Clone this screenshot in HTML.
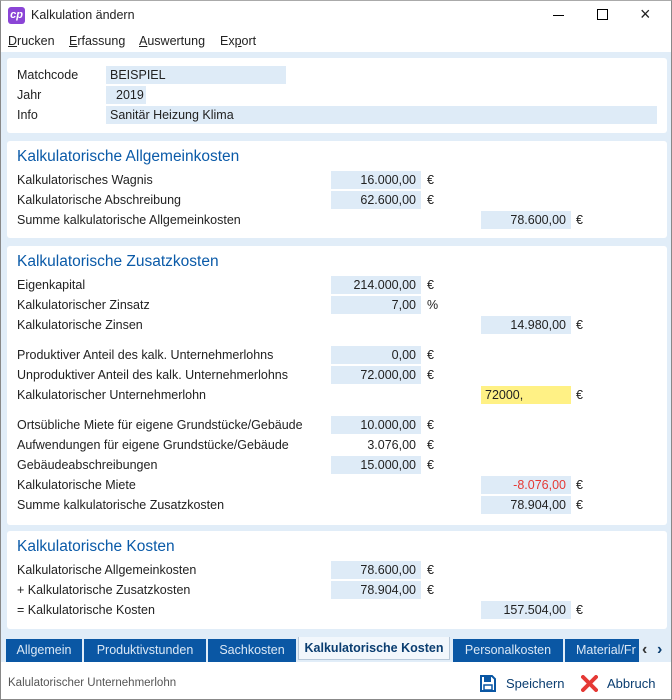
<!DOCTYPE html>
<html><head><meta charset="utf-8"><style>
*{margin:0;padding:0;box-sizing:border-box}
body{width:672px;height:700px;overflow:hidden;font-family:"Liberation Sans",sans-serif;font-size:12.5px;color:#222;background:#fff;position:relative}
.a{position:absolute;white-space:nowrap}
.win{position:absolute;left:0;top:0;width:672px;height:700px;border:1px solid #888;border-top:1px solid #aaa}
.content{position:absolute;left:1px;top:52px;width:670px;height:610px;background:#e1edf8}
.panel{position:absolute;left:6px;width:660px;background:#fff;border-radius:3px}
.h{position:absolute;left:10px;color:#0a5aa8;font-size:15.5px}
.l{position:absolute;left:10px}
.f{position:absolute;height:18px;background:#deebf7;text-align:right;padding-right:5px;line-height:18px}
.e{position:absolute;line-height:18px}
.tab{position:absolute;top:639px;height:23px;background:#0a57a4;color:#dbe8f5;font-size:12.5px;line-height:23px;text-align:center}
u{text-decoration:underline}
</style></head><body>
<div class="win"></div>
<div class="a" style="left:8px;top:7px;width:17px;height:17px;background:#8b45d6;border-radius:3px;color:#fff;font-size:11px;text-align:center;line-height:17px;font-style:italic;font-weight:bold">cp</div>
<div class="a" style="left:31px;top:8px;font-size:12.5px">Kalkulation ändern</div>
<div class="a" style="left:553px;top:15px;width:11px;height:1px;background:#000"></div>
<div class="a" style="left:597px;top:9px;width:11px;height:11px;border:1px solid #000"></div>
<div class="a" style="left:640px;top:4px;font-size:18px;font-weight:300">×</div>
<div class="a" style="left:8px;top:34px"><u>D</u>rucken</div>
<div class="a" style="left:69px;top:34px"><u>E</u>rfassung</div>
<div class="a" style="left:139px;top:34px"><u>A</u>uswertung</div>
<div class="a" style="left:220px;top:34px">Ex<u>p</u>ort</div>
<div class="content">
 <div class="panel" style="top:6px;height:75px">
  <div class="l" style="top:10px">Matchcode</div>
  <div class="f" style="left:99px;top:8px;width:180px;text-align:left;padding-left:4px">BEISPIEL</div>
  <div class="l" style="top:30px">Jahr</div>
  <div class="f" style="left:99px;top:28px;width:40px;text-align:left;padding-left:10px">2019</div>
  <div class="l" style="top:50px">Info</div>
  <div class="f" style="left:99px;top:48px;width:551px;text-align:left;padding-left:4px">Sanitär Heizung Klima</div>
 </div>
 <div class="panel" style="top:89px;height:97px">
  <div class="h" style="top:7px">Kalkulatorische Allgemeinkosten</div>
  <div class="l" style="top:32px">Kalkulatorisches Wagnis</div>
  <div class="f" style="left:324px;top:30px;width:90px">16.000,00</div><div class="e" style="left:420px;top:30px">€</div>
  <div class="l" style="top:52px">Kalkulatorische Abschreibung</div>
  <div class="f" style="left:324px;top:50px;width:90px">62.600,00</div><div class="e" style="left:420px;top:50px">€</div>
  <div class="l" style="top:72px">Summe kalkulatorische Allgemeinkosten</div>
  <div class="f" style="left:474px;top:70px;width:90px">78.600,00</div><div class="e" style="left:569px;top:70px">€</div>
 </div>
 <div class="panel" style="top:194px;height:279px">
  <div class="h" style="top:7px">Kalkulatorische Zusatzkosten</div>
  <div class="l" style="top:32px">Eigenkapital</div>
  <div class="f" style="left:324px;top:30px;width:90px">214.000,00</div><div class="e" style="left:420px;top:30px">€</div>
  <div class="l" style="top:52px">Kalkulatorischer Zinsatz</div>
  <div class="f" style="left:324px;top:50px;width:90px">7,00</div><div class="e" style="left:420px;top:50px">%</div>
  <div class="l" style="top:72px">Kalkulatorische Zinsen</div>
  <div class="f" style="left:474px;top:70px;width:90px">14.980,00</div><div class="e" style="left:569px;top:70px">€</div>
  <div class="l" style="top:102px">Produktiver Anteil des kalk. Unternehmerlohns</div>
  <div class="f" style="left:324px;top:100px;width:90px">0,00</div><div class="e" style="left:420px;top:100px">€</div>
  <div class="l" style="top:122px">Unproduktiver Anteil des kalk. Unternehmerlohns</div>
  <div class="f" style="left:324px;top:120px;width:90px">72.000,00</div><div class="e" style="left:420px;top:120px">€</div>
  <div class="l" style="top:142px">Kalkulatorischer Unternehmerlohn</div>
  <div class="f" style="left:474px;top:140px;width:90px;background:#fff185;text-align:left;padding-left:4px">72000,</div><div class="e" style="left:569px;top:140px">€</div>
  <div class="l" style="top:172px">Ortsübliche Miete für eigene Grundstücke/Gebäude</div>
  <div class="f" style="left:324px;top:170px;width:90px">10.000,00</div><div class="e" style="left:420px;top:170px">€</div>
  <div class="l" style="top:192px">Aufwendungen für eigene Grundstücke/Gebäude</div>
  <div class="f" style="left:324px;top:190px;width:90px;background:#fff">3.076,00</div><div class="e" style="left:420px;top:190px">€</div>
  <div class="l" style="top:212px">Gebäudeabschreibungen</div>
  <div class="f" style="left:324px;top:210px;width:90px">15.000,00</div><div class="e" style="left:420px;top:210px">€</div>
  <div class="l" style="top:232px">Kalkulatorische Miete</div>
  <div class="f" style="left:474px;top:230px;width:90px;color:#e53935">-8.076,00</div><div class="e" style="left:569px;top:230px">€</div>
  <div class="l" style="top:252px">Summe kalkulatorische Zusatzkosten</div>
  <div class="f" style="left:474px;top:250px;width:90px">78.904,00</div><div class="e" style="left:569px;top:250px">€</div>
 </div>
 <div class="panel" style="top:479px;height:98px">
  <div class="h" style="top:7px">Kalkulatorische Kosten</div>
  <div class="l" style="top:32px">Kalkulatorische Allgemeinkosten</div>
  <div class="f" style="left:324px;top:30px;width:90px">78.600,00</div><div class="e" style="left:420px;top:30px">€</div>
  <div class="l" style="top:52px">+ Kalkulatorische Zusatzkosten</div>
  <div class="f" style="left:324px;top:50px;width:90px">78.904,00</div><div class="e" style="left:420px;top:50px">€</div>
  <div class="l" style="top:72px">= Kalkulatorische Kosten</div>
  <div class="f" style="left:474px;top:70px;width:90px">157.504,00</div><div class="e" style="left:569px;top:70px">€</div>
 </div>
</div>
<div class="tab" style="left:6px;width:76px">Allgemein</div>
<div class="tab" style="left:84px;width:122px">Produktivstunden</div>
<div class="tab" style="left:208px;width:88px">Sachkosten</div>
<div class="tab" style="left:298px;width:152px;top:637px;background:#f2f7fc;color:#0a3d70;font-weight:bold;border:1px solid #b8c8d8;border-top:none;font-size:12.5px">Kalkulatorische Kosten</div>
<div class="tab" style="left:453px;width:110px">Personalkosten</div>
<div class="tab" style="left:565px;width:74px;overflow:hidden;text-align:left;padding-left:11px">Material/Fr</div>
<div class="a" style="left:642px;top:641px;font-size:16px;font-weight:bold;color:#333">‹</div>
<div class="a" style="left:657px;top:641px;font-size:16px;font-weight:bold;color:#0a3d70">›</div>
<div class="a" style="left:8px;top:677px;font-size:11.5px;color:#555">Kalulatorischer Unternehmerlohn</div>
<svg class="a" style="left:480px;top:675px" width="16" height="17" viewBox="0 0 16 17"><path d="M1 1h11l3 3v12H1z" fill="none" stroke="#0a57a4" stroke-width="2"/><rect x="4" y="2" width="7" height="5" fill="#0a57a4"/><rect x="4" y="10" width="8" height="5" fill="none" stroke="#0a57a4" stroke-width="1.5"/></svg>
<div class="a" style="left:506px;top:676px;color:#0a3d70;font-size:13px">Speichern</div>
<svg class="a" style="left:581px;top:675px" width="17" height="17" viewBox="0 0 17 17"><path d="M2 2L15 15M15 2L2 15" stroke="#e53935" stroke-width="4" stroke-linecap="round"/></svg>
<div class="a" style="left:607px;top:676px;color:#0a3d70;font-size:13px">Abbruch</div>
</body></html>
